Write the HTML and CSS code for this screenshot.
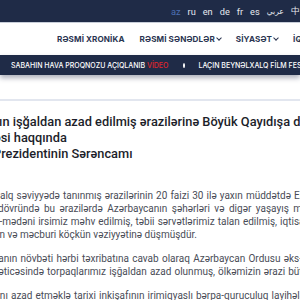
FILE: index.html
```html
<!DOCTYPE html>
<html>
<head>
  <title>Böyük Qayıdış</title>
  <link rel="stylesheet" href="styles.css">
</head>
<body>
  <div class="topbar">
    <div class="langs">
      <a href="#" class="active">az</a>
      <a href="#">ru</a>
      <a href="#">en</a>
      <a href="#">de</a>
      <a href="#">fr</a>
      <a href="#">es</a>
      <a href="#" class="ar">عربي</a>
      <a href="#">中</a>
    </div>
  </div>

  <div class="navbar">
    <a href="#">RƏSMİ XRONİKA</a>
    <a href="#">RƏSMİ SƏNƏDLƏR <span class="chev"></span></a>
    <a href="#">SİYASƏT <span class="chev"></span></a>
    <a href="#">İQTİSADİYYAT</a>
  </div>

  <div class="ticker">
    <span class="dot first"></span>
    <span class="news">SABAHIN HAVA PROQNOZU AÇIQLANIB <em>VİDEO</em></span>
    <span class="dot"></span>
    <span class="news">LAÇIN BEYNƏLXALQ FİLM FESTİVALI</span>
  </div>

  <div class="divider"></div>

  <div class="article">
    <h1>
      <span class="l1">nın işğaldan azad edilmiş ərazilərinə Böyük Qayıdışa dair</span>
      <span class="l2">əsi haqqında</span>
      <span class="l3">Prezidentinin Sərəncamı</span>
    </h1>

    <p>
      <span class="row r1">xalq səviyyədə tanınmış ərazilərinin 20 faizi 30 ilə yaxın müddətdə Ermənistan</span>
      <span class="row r2">dövründə bu ərazilərdə Azərbaycanın şəhərləri və digər yaşayış məntəqələri</span>
      <span class="row r3">i-mədəni irsimiz məhv edilmiş, təbii sərvətlərimiz talan edilmiş, iqtisadi</span>
      <span class="row r4">ın və məcburi köçkün vəziyyətinə düşmüşdür.</span>
    </p>

    <p>
      <span class="row r5">tanın növbəti hərbi təxribatına cavab olaraq Azərbaycan Ordusu əks-hücum</span>
      <span class="row r6">nəticəsində torpaqlarımız işğaldan azad olunmuş, ölkəmizin ərazi bütövlüyü</span>
    </p>

    <p>
      <span class="row r7">rını azad etməklə tarixi inkişafının irimiqyaslı bərpa-quruculuq layihələri</span>
    </p>
  </div>
</body>
</html>
```

FILE: styles.css
```css
html, body {
  margin: 0;
  padding: 0;
  overflow: hidden;
  background: #fff;
  font-family: Roboto, "Noto Sans", sans-serif;
}

.topbar {
  background-color: #1f2b47;
  height: 22px;
  border-bottom: 1px solid #c8ced9;
  display: flex;
  padding-left: 171px;
  overflow: hidden;
}

.langs {
  display: flex;
  align-items: center;
  gap: 7px;
  white-space: nowrap;
}

.langs a {
  color: #e6e9ef;
  text-decoration: none;
  font-size: 9.2px;
}

.langs a.active {
  color: #4d6fb3;
}

.langs a.ar {
  font-family: "DejaVu Sans", sans-serif;
  font-size: 7.6px;
}

.navbar {
  height: 32px;
  display: flex;
  align-items: center;
  gap: 15px;
  padding-left: 57px;
  white-space: nowrap;
  overflow: hidden;
}

.navbar a {
  font-family: Inter, sans-serif;
  font-weight: 700;
  font-size: 8.1px;
  color: #2a3450;
  text-decoration: none;
  letter-spacing: 0.1px;
}

.chev {
  display: inline-block;
  width: 3px;
  height: 3px;
  border-right: 1.2px solid #2a3450;
  border-bottom: 1.2px solid #2a3450;
  transform: rotate(45deg);
  position: relative;
  top: -2px;
}

.ticker {
  background-color: #1f2b47;
  height: 20px;
  display: flex;
  align-items: center;
  white-space: nowrap;
  overflow: hidden;
  box-shadow: 0 3px 5px rgba(20, 30, 60, 0.35);
  position: relative;
}

.ticker .news {
  color: #fff;
  font-family: Inter, sans-serif;
  font-size: 7px;
  font-weight: 500;
}

.ticker em {
  font-style: normal;
  color: #e2242b;
}

.dot {
  width: 3px;
  height: 3px;
  border-radius: 50%;
  background: #1f2b47;
  border: 1.2px solid #fff;
  margin: 0 13px 0 15px;
}

.dot.first {
  margin: 0 12px 0 -3px;
}

.divider {
  height: 2px;
  background: #e2e6ef;
  margin-top: 24px;
}

.article {
  white-space: nowrap;
}

h1 {
  margin: 13px 0 0;
  font-size: 12.8px;
  font-weight: 500;
  line-height: 16px;
  color: #1c1e2a;
}

h1 span {
  display: block;
}

h1 .l1 {
  margin-left: -8px;
}

h1 .l2 {
  margin-left: -6px;
}

h1 .l3 {
  margin-left: -7px;
}

p {
  margin: 0 0 11px;
  font-size: 10px;
  line-height: 13px;
  color: #4a4d57;
}

.article h1 + p {
  margin-top: 27px;
}

.row {
  display: block;
}

.r1 { margin-left: -5px; word-spacing: 0.6px; }
.r2 { margin-left: -2px; word-spacing: 2px; }
.r3 { margin-left: -3px; word-spacing: 0.6px; }
.r4 { margin-left: -3px; }
.r5 { margin-left: -5px; word-spacing: 0.8px; }
.r6 { margin-left: -7px; word-spacing: 0.6px; }
.r7 { margin-left: -6px; word-spacing: 0.6px; }
```
